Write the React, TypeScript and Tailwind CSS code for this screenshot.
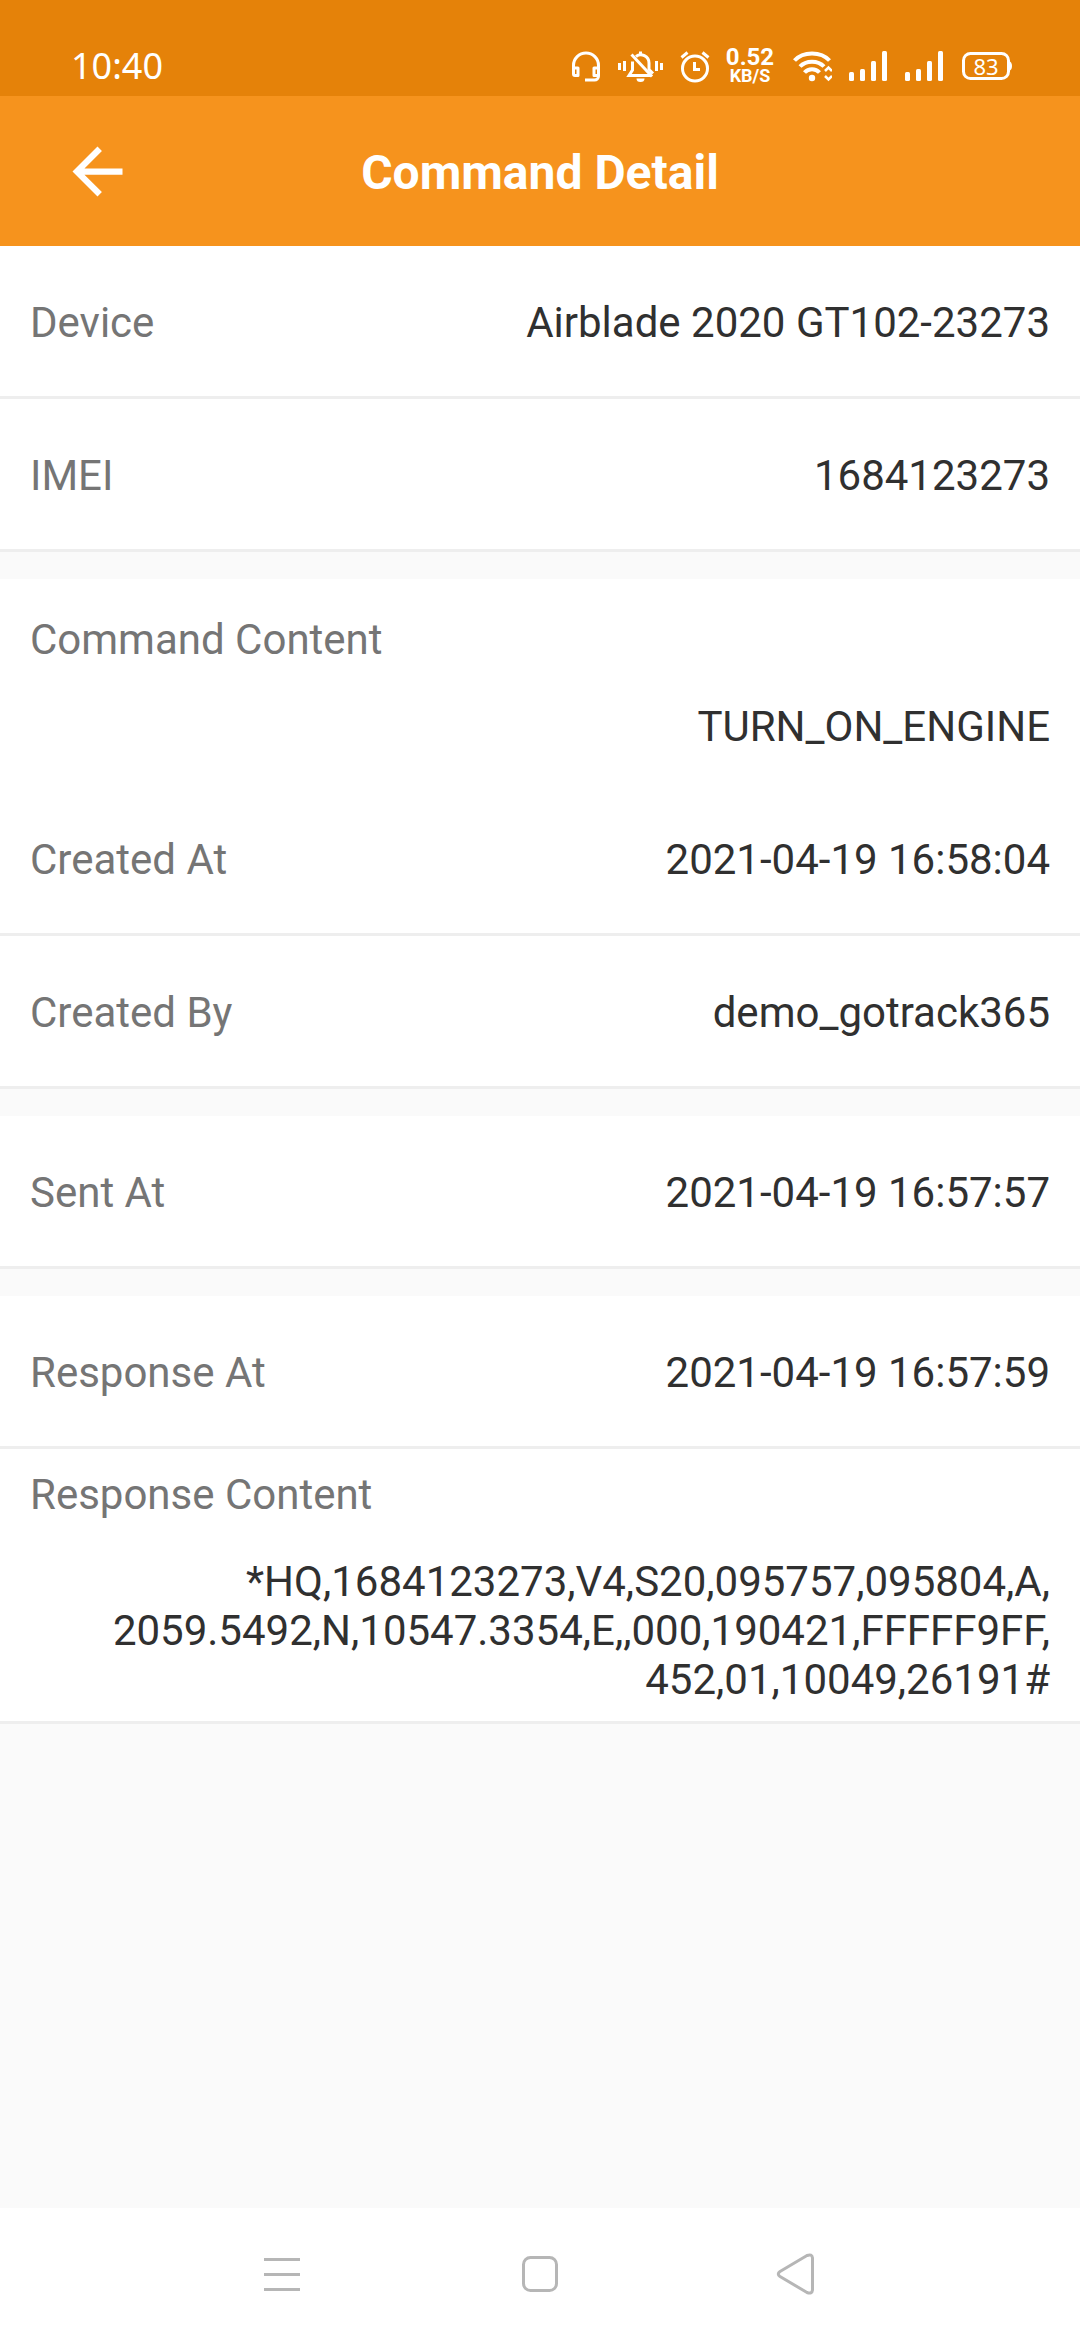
import type { ReactNode } from "react";

function Headset() {
  return (
    <svg width="34" height="36" viewBox="0 0 34 36" fill="none" stroke="#fff" strokeWidth="3">
      <path d="M3.500 21V17.500A12.500 12.500 0 0 1 28.500 17.500V28a4 4 0 0 1-4 4H15" />
      <path d="M3.500 20h4.500v7.500h-3a1.500 1.500 0 0 1-1.500-1.500zM28.500 20h-4.500v7.500h3a1.500 1.500 0 0 0 1.500-1.500z" strokeLinejoin="round" />
    </svg>
  );
}

function BellOff() {
  return (
    <svg width="48" height="36" viewBox="0 0 48 36" fill="none" stroke="#fff" strokeWidth="3">
      <path d="M1.500 15v7M6.500 13v10M38.500 13v10M43.500 15v7" />
      <path d="M14.500 13.500V22l-3.500 5.500h22M18 8.500c5-4 13-.5 13 6.500v6.500l4 4" />
      <path d="M13.500 6.500L34 28.500" />
      <path d="M22.500 3.500v3" />
      <path d="M18.500 30.500h8a4 3.500 0 0 1-8 0z" fill="#fff" stroke="none" />
    </svg>
  );
}

function Alarm() {
  return (
    <svg width="30" height="36" viewBox="0 0 30 36" fill="none" stroke="#fff" strokeWidth="3">
      <circle cx="15" cy="20.500" r="12.500" />
      <path d="M14.500 14v7.500H20" />
      <path d="M1.500 9.500l6-5M28.500 9.500l-6-5" />
    </svg>
  );
}

function Wifi() {
  return (
    <svg width="42" height="36" viewBox="0 0 42 36" fill="none" stroke="#fff" strokeWidth="4">
      <path d="M4.500 12.500C13 3 31 3 39.500 12.500" />
      <path d="M10 18.500C16 12 28 12 34 18.500" />
      <path d="M14.500 24.500C18.500 20 25.500 20 29.500 24.500" />
      <circle cx="22" cy="30" r="3.200" fill="#fff" stroke="none" />
      <path d="M35 23l3.500-3.500L42 23M35 28l3.500 3.500L42 28" strokeWidth="2.500" />
    </svg>
  );
}

function Signal() {
  return (
    <svg width="42" height="36" viewBox="0 0 42 36" fill="#fff">
      <rect x="3" y="24" width="5" height="9" rx="1.500" />
      <rect x="14" y="21" width="5" height="12" rx="1.500" />
      <rect x="25" y="13" width="5" height="20" rx="1.500" />
      <rect x="36" y="3" width="5" height="30" rx="1.500" />
    </svg>
  );
}

function Battery() {
  return (
    <div className="relative flex h-9 w-[54px] items-center">
      <svg className="absolute inset-0" width="54" height="36" viewBox="0 0 54 36" fill="none">
        <rect x="5.500" y="5.500" width="45" height="25" rx="7" stroke="#fff" strokeWidth="3" />
        <path d="M51 13q3 1 3 5t-3 5z" fill="#fff" />
      </svg>
      <span className="w-full pl-0.5 text-center text-[22px] leading-[22px]">83</span>
    </div>
  );
}

function StatusBar() {
  return (
    <div className="flex h-24 items-end justify-between bg-[#e58209] pr-[68px] pb-[11px] pl-[71px] font-['Noto_Sans'] text-white">
      <span className="text-[36px] leading-[38px]">10:40</span>
      <div className="flex items-center gap-[14px]">
        <Headset />
        <BellOff />
        <Alarm />
        <p className="w-[52px] text-center font-['Roboto'] text-[18px] leading-[18px] font-bold">
          <span className="block text-2xl leading-5">0.52</span>
          KB/S
        </p>
        <Wifi />
        <Signal />
        <Signal />
        <Battery />
      </div>
    </div>
  );
}

function Header() {
  return (
    <header className="grid h-[150px] grid-cols-[1fr_auto_1fr] items-center bg-[#f6931d] text-white">
      <button type="button" aria-label="Back" className="ml-[60px] flex size-[75px] items-center justify-center">
        <svg width="75" height="75" viewBox="0 0 24 24" fill="#fff">
          <path d="M20 11H7.830l5.590-5.590L12 4l-8 8 8 8 1.410-1.410L7.830 13H20v-2z" />
        </svg>
      </button>
      <h1 className="pt-1 text-5xl font-bold">Command Detail</h1>
    </header>
  );
}

function Group({ children }: { children: ReactNode }) {
  return <dl className="bg-white">{children}</dl>;
}

function Row({ label, value }: { label: string; value: string }) {
  return (
    <div className="flex h-[153px] items-center justify-between border-b-3 border-[#eeeeee] px-[30px] pt-0.5">
      <dt className="text-[#757575]">{label}</dt>
      <dd>{value}</dd>
    </div>
  );
}

function Block({ label, lines, className }: { label: string; lines: string[]; className: string }) {
  return (
    <div className={"flex flex-col gap-[38px] px-[30px] " + className}>
      <dt className="text-[#757575]">{label}</dt>
      <dd className="text-right">
        {lines.map((line) => (
          <div key={line}>{line}</div>
        ))}
      </dd>
    </div>
  );
}

function NavBar() {
  return (
    <nav className="grid h-[132px] grid-cols-[1fr_auto_1fr] items-center bg-white px-[246px]">
      <button type="button" aria-label="Recent apps" className="justify-self-start">
        <svg width="72" height="72" viewBox="0 0 72 72" stroke="#b6b6b6" strokeWidth="3">
          <path d="M18 21.500h36M18 36.500h36M18 51.500h36" />
        </svg>
      </button>
      <button type="button" aria-label="Home">
        <svg width="72" height="72" viewBox="0 0 72 72" fill="none" stroke="#b6b6b6" strokeWidth="3">
          <rect x="19.500" y="19.500" width="33" height="33" rx="7" />
        </svg>
      </button>
      <button type="button" aria-label="Back" className="justify-self-end">
        <svg width="72" height="72" viewBox="0 0 72 72" fill="none" stroke="#b6b6b6" strokeWidth="3" strokeLinejoin="round">
          <path d="M18 33.500L45 17.500Q50 15.500 50.500 20V52Q50 56.500 45 54.500L18 38.500Q14.500 36 18 33.500z" />
        </svg>
      </button>
    </nav>
  );
}

export default function App() {
  return (
    <div className="flex min-h-screen flex-col bg-[#fafafa] font-['Roboto',sans-serif]">
      <StatusBar />
      <Header />
      <main className="flex grow flex-col gap-[27px] text-[42px] leading-[49px] text-[#303030]">
        <Group>
          <Row label="Device" value="Airblade 2020 GT102-23273" />
          <Row label="IMEI" value="1684123273" />
        </Group>
        <Group>
          <Block className="pt-9 pb-8" label="Command Content" lines={["TURN_ON_ENGINE"]} />
          <Row label="Created At" value="2021-04-19 16:58:04" />
          <Row label="Created By" value="demo_gotrack365" />
        </Group>
        <Group>
          <Row label="Sent At" value="2021-04-19 16:57:57" />
        </Group>
        <Group>
          <Row label="Response At" value="2021-04-19 16:57:59" />
          <Block
            className="border-b-3 border-[#eeeeee] pt-[21px] pb-[17px]"
            label="Response Content"
            lines={[
              "*HQ,1684123273,V4,S20,095757,095804,A,",
              "2059.5492,N,10547.3354,E,,000,190421,FFFFF9FF,",
              "452,01,10049,26191#",
            ]}
          />
        </Group>
      </main>
      <NavBar />
    </div>
  );
}
